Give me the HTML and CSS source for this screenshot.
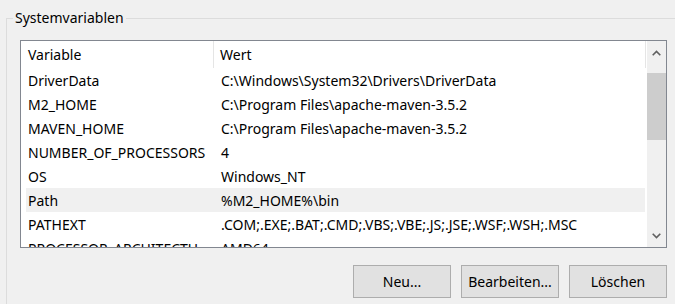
FILE: index.html
```html
<!DOCTYPE html>
<html>
  <head>
    <link rel="stylesheet" href="styles.css">
  </head>
  <body>
    <fieldset class="group">
      <legend class="group-title">Systemvariablen</legend>
      <div class="listbox">
        <div class="list-view">
          <div class="list-header">
            <div class="col col-name">Variable</div>
            <div class="col col-value">Wert</div>
          </div>
          <div class="list-rows">
            <div class="row"><div class="col col-name">DriverData</div><div class="col col-value">C:\Windows\System32\Drivers\DriverData</div></div>
            <div class="row"><div class="col col-name">M2_HOME</div><div class="col col-value">C:\Program Files\apache-maven-3.5.2</div></div>
            <div class="row"><div class="col col-name">MAVEN_HOME</div><div class="col col-value">C:\Program Files\apache-maven-3.5.2</div></div>
            <div class="row"><div class="col col-name">NUMBER_OF_PROCESSORS</div><div class="col col-value">4</div></div>
            <div class="row"><div class="col col-name">OS</div><div class="col col-value">Windows_NT</div></div>
            <div class="row selected"><div class="col col-name">Path</div><div class="col col-value">%M2_HOME%\bin</div></div>
            <div class="row"><div class="col col-name">PATHEXT</div><div class="col col-value">.COM;.EXE;.BAT;.CMD;.VBS;.VBE;.JS;.JSE;.WSF;.WSH;.MSC</div></div>
            <div class="row"><div class="col col-name">PROCESSOR_ARCHITECTU...</div><div class="col col-value">AMD64</div></div>
          </div>
        </div>
        <div class="scrollbar">
          <div class="scroll-btn">
            <svg width="9" height="6" viewBox="0 0 9 6"><path d="M0.7 5.3 L4.5 1.5 L8.3 5.3" fill="none" stroke="#606060" stroke-width="1.6"/></svg>
          </div>
          <div class="scroll-track">
            <div class="scroll-thumb"></div>
          </div>
          <div class="scroll-btn">
            <svg width="9" height="6" viewBox="0 0 9 6"><path d="M0.7 0.7 L4.5 4.5 L8.3 0.7" fill="none" stroke="#606060" stroke-width="1.6"/></svg>
          </div>
        </div>
      </div>
      <div class="buttons">
        <button class="btn">Neu...</button>
        <button class="btn">Bearbeiten...</button>
        <button class="btn">Löschen</button>
      </div>
    </fieldset>
  </body>
</html>
```

FILE: styles.css
```css
html,
body {
  margin: 0;
  height: 100%;
  overflow: hidden;
}
body {
  background-color: #f0f0f0;
  font-family: "Noto Sans", "Open Sans", sans-serif;
  font-size: 14px;
  color: #000000;
}
.group {
  margin: 8px 0 0 6px;
  padding: 0 0 0 13px;
  width: 700px;
  height: 296px;
  border: 1px solid #dcdcdc;
  border-bottom: none;
  box-sizing: border-box;
}
.group-title {
  margin-left: -7px;
  padding: 0 2px;
  line-height: 20px;
  font-size: 14px;
}
.listbox {
  display: flex;
  margin-top: 12px;
  width: 647px;
  height: 208px;
  border: 1px solid #828790;
  box-sizing: border-box;
  background-color: #ffffff;
}
.list-view {
  flex: 1;
  overflow: hidden;
}
.list-header {
  display: flex;
  height: 27px;
  align-items: center;
  width: 624px;
  border-right: 1px solid #e5e5e5;
}
.list-header .col-name {
  width: 193px;
  padding-left: 7px;
  box-sizing: border-box;
  border-right: 1px solid #e5e5e5;
  align-self: stretch;
  display: flex;
  align-items: center;
}
.list-header .col-value {
  padding-left: 6px;
}
.list-rows {
  margin-left: 5px;
  width: 619px;
}
.row {
  display: flex;
  height: 24px;
  align-items: center;
  white-space: nowrap;
}
.row .col-name {
  width: 188px;
  padding-left: 2px;
  box-sizing: border-box;
  overflow: hidden;
}
.row .col-value {
  padding-left: 7px;
}
.row.selected {
  background-color: #f0f0f0;
}
.scrollbar {
  width: 19px;
  display: flex;
  flex-direction: column;
  background-color: #f0f0f0;
}
.scroll-btn {
  height: 23px;
  display: flex;
  align-items: center;
  justify-content: center;
}
.scroll-track {
  flex: 1;
  padding-top: 9px;
}
.scroll-thumb {
  height: 67px;
  background-color: #cdcdcd;
}
.buttons {
  display: flex;
  justify-content: flex-end;
  gap: 10px;
  width: 647px;
  margin-top: 17px;
}
.btn {
  width: 98px;
  height: 33px;
  background-color: #e1e1e1;
  border: 1px solid #adadad;
  font-family: inherit;
  font-size: 14px;
  color: #000000;
  padding: 0;
}
```
